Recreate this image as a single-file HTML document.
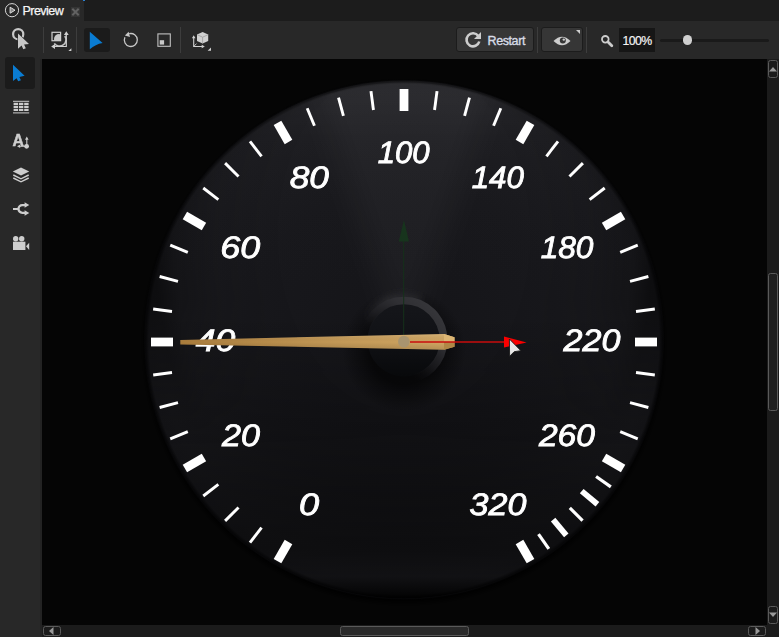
<!DOCTYPE html>
<html><head><meta charset="utf-8"><title>Preview</title>
<style>
html,body{margin:0;padding:0;background:#282828;}
body{width:779px;height:637px;position:relative;overflow:hidden;font-family:"Liberation Sans",sans-serif;color:#e6e6e6;}
.abs{position:absolute;}
#titlebar{left:0;top:0;width:779px;height:21px;background:#1c1c1c;}
#tab{left:0;top:0;width:84px;height:21px;background:#282828;}
#tabtxt{left:22.5px;top:4px;font-size:12.5px;line-height:15px;color:#f6f6f6;letter-spacing:-0.55px;-webkit-text-stroke:0.25px #f6f6f6;}
#toolbar{left:0;top:21px;width:779px;height:38px;background:#282828;}
#side{left:0;top:59px;width:42px;height:578px;background:#282828;}
#view{left:42px;top:59px;width:725px;height:566px;background:#050505;overflow:hidden;}
#vscroll{left:767px;top:59px;width:12px;height:566px;background:#1b1b1b;}
#hscroll{left:42px;top:625px;width:737px;height:12px;background:#1b1b1b;}
.sep{width:1px;background:#3d3d3d;}
.btn{background:#1b1b1b;border-radius:3px;}
.sbtn{border:1px solid #5a5a5a;border-radius:2.5px;background:#1b1b1b;box-sizing:border-box;}
#restart{left:456px;top:27px;width:78px;height:25px;background:#363636;border:1px solid #1c1c1c;border-radius:3px;box-sizing:border-box;}
#eye{left:541px;top:27px;width:42px;height:25px;background:#363636;border:1px solid #1c1c1c;border-radius:3px;box-sizing:border-box;}
#zoomtxt{left:619px;top:28px;width:36px;height:24px;background:#161616;font-size:12.3px;line-height:26px;text-align:center;color:#f4f4f4;letter-spacing:-0.6px;-webkit-text-stroke:0.2px #f4f4f4;}
</style></head><body>
<div id="titlebar" class="abs"></div>
<div id="tab" class="abs"></div>
<div class="abs" style="left:83px;top:0;width:2px;height:1px;background:#2a7fd0"></div>
<svg class="abs" style="left:4px;top:2px" width="17" height="17" viewBox="0 0 17 17"><circle cx="8" cy="8.2" r="6.6" fill="none" stroke="#d8d8d8" stroke-width="1"/><path d="M6.1 5.2 L11 8.2 L6.1 11.2Z" fill="#8a8a8a" stroke="#dcdcdc" stroke-width="1" stroke-linejoin="round"/></svg>
<div id="tabtxt" class="abs">Preview</div>
<svg class="abs" style="left:71px;top:7px" width="9" height="10" viewBox="0 0 9 10"><rect width="9" height="10" fill="#343434"/><path d="M1.3 1.7L7.7 8.3M7.7 1.7L1.3 8.3" stroke="#626262" stroke-width="2"/></svg>

<div id="toolbar" class="abs"></div>
<div id="side" class="abs"></div>
<div class="abs" style="left:40px;top:59px;width:2px;height:578px;background:#232323"></div>

<!-- toolbar items -->
<div class="abs sep" style="left:43px;top:27px;height:26px"></div>
<div class="abs sep" style="left:76px;top:27px;height:26px"></div>
<div class="abs sep" style="left:180px;top:27px;height:26px"></div>
<div class="abs btn" style="left:84px;top:28px;width:26px;height:24px"></div>
<svg class="abs" style="left:0;top:21px" width="260" height="38" viewBox="0 21 260 38">
 <!-- pick cursor -->
 <circle cx="18.2" cy="34.2" r="5.1" fill="none" stroke="#c8c8c8" stroke-width="2.2"/>
 <path d="M18 33.6 L18 48.8 L21.6 45.6 L23.3 49.3 L25.8 48.2 L24.1 44.6 L29 44Z" fill="#c8c8c8" stroke="#282828" stroke-width="1.2" paint-order="stroke"/>
 <!-- layout icon -->
 <clipPath id="sqc"><rect x="52" y="32.3" width="8.6" height="8.4"/></clipPath>
 <circle cx="59" cy="39" r="5" fill="#c8c8c8" clip-path="url(#sqc)"/>
 <rect x="52" y="32.3" width="8.6" height="8.4" fill="none" stroke="#d0d0d0" stroke-width="1.2"/>
 <path d="M54.3 43.4 A6.2 6.2 0 0 0 64.8 36" fill="none" stroke="#c4c4c4" stroke-width="1.6"/>
 <path d="M53 46.5 H66.3 V33.5" fill="none" stroke="#d0d0d0" stroke-width="1.2"/>
 <path d="M66.3 31.2 L63.9 35 H68.7Z M51.2 46.5 L55 44.1 V48.9Z" fill="#d0d0d0"/>
 <path d="M71.4 48.2 V51 H68.4Z" fill="#d0d0d0"/>
 <!-- play -->
 <path d="M89.8 31.8 L102.6 43 Q95.5 44.3 89.8 49.2Z" fill="#0a7cd2"/>
 <!-- reload -->
 <path d="M129.2 33.7 A6.5 6.5 0 1 1 124.9 37.3" fill="none" stroke="#c8c8c8" stroke-width="1.3"/>
 <path d="M124.9 35.6 L128.6 31.8 L130 36.9Z" fill="#c8c8c8"/>
 <!-- stop square -->
 <rect x="157.9" y="33.9" width="12.4" height="12.4" fill="none" stroke="#c0c0c0" stroke-width="1.1"/>
 <rect x="159.7" y="40.2" width="4.4" height="4.4" fill="#c8c8c8"/>
 <!-- cube -->
 <path d="M202.6 32 L208.2 34.6 V41 L202.6 43.6 L197 41 V34.6Z" fill="#d0d0d0"/>
 <path d="M197 34.6 L202.6 37.2 L208.2 34.6 M202.6 37.2 V43.6" fill="none" stroke="#9a9a9a" stroke-width="0.8"/>
 <path d="M193.7 37 V46.5 H203" fill="none" stroke="#d0d0d0" stroke-width="1.1"/>
 <path d="M193.7 35.2 L191.9 38.3 H195.5Z M204.8 46.5 L201.7 44.7 V48.3Z" fill="#d0d0d0"/>
 <path d="M194 46.2 L196.5 43.6" stroke="#c0c0c0" stroke-width="1"/>
 <path d="M211 47.6 V50.8 H207.6Z" fill="#d0d0d0"/>
</svg>

<div id="restart" class="abs"></div>
<svg class="abs" style="left:463px;top:29px" width="20" height="20" viewBox="0 0 20 20"><path d="M15.3 7 A6.5 6.5 0 1 0 16.3 12.5" fill="none" stroke="#cdcdcd" stroke-width="2.6"/><path d="M18 3 V10 H11Z" fill="#cdcdcd"/></svg>
<div class="abs" style="left:487.5px;top:33px;font-size:12.5px;line-height:16px;color:#d8dce6;letter-spacing:-0.4px;-webkit-text-stroke:0.35px #d8dce6">Restart</div>
<div class="abs sep" style="left:537px;top:27px;height:26px"></div>
<div id="eye" class="abs"></div>
<svg class="abs" style="left:552px;top:33.5px" width="20" height="14" viewBox="0 0 20 14"><path d="M1.5 7 Q10 -1.5 18.5 7 Q10 15.5 1.5 7Z" fill="#cdcdcd"/><circle cx="10.8" cy="6.5" r="3" fill="#363636"/><circle cx="11.8" cy="5.6" r="1.2" fill="#cdcdcd"/></svg>
<svg class="abs" style="left:575px;top:29px" width="6" height="6"><path d="M1 1 H5 V5Z" fill="#cdcdcd"/></svg>
<div class="abs sep" style="left:586px;top:27px;height:26px"></div>
<svg class="abs" style="left:599.5px;top:33.5px" width="14" height="14" viewBox="0 0 14 14"><circle cx="5.3" cy="5.3" r="3.3" fill="none" stroke="#cdcdcd" stroke-width="1.8"/><path d="M8 8 L11.8 11.8" stroke="#cdcdcd" stroke-width="2.8" stroke-linecap="round"/></svg>
<div id="zoomtxt" class="abs">100%</div>
<div class="abs" style="left:660px;top:38.5px;width:109px;height:3.5px;background:#1a1a1a;border-radius:2px"></div>
<div class="abs" style="left:683px;top:35.3px;width:9.4px;height:9.4px;border-radius:50%;background:#d0d0d0"></div>

<!-- sidebar -->
<div class="abs btn" style="left:5px;top:57px;width:30px;height:31.5px"></div>
<svg class="abs" style="left:0;top:59px;will-change:transform" width="42" height="210" viewBox="0 59 42 210">
 <path d="M13 64.8 L13 81 L16.6 78.2 L18.2 81.3 L20.9 80.2 L19.4 77 L24.6 75.8Z" fill="#0a7cd2"/>
 <!-- grid -->
 <g fill="#cdcdcd">
 <rect x="13" y="100.8" width="16.2" height="1"/>
 <rect x="13" y="112.4" width="16.2" height="1"/>
 <rect x="13.6" y="102.8" width="4.4" height="2.2"/><rect x="18.9" y="102.8" width="4.4" height="2.2"/><rect x="24.2" y="102.8" width="4.4" height="2.2"/>
 <rect x="13.6" y="105.8" width="4.4" height="2.2"/><rect x="18.9" y="105.8" width="4.4" height="2.2"/><rect x="24.2" y="105.8" width="4.4" height="2.2"/>
 <rect x="13.6" y="108.8" width="4.4" height="2.2"/><rect x="18.9" y="108.8" width="4.4" height="2.2"/><rect x="24.2" y="108.8" width="4.4" height="2.2"/>
 </g>
 <!-- A -->
 <text x="12.6" y="145.5" style="font-family:'Liberation Sans',sans-serif;font-weight:bold;font-size:15.8px" fill="#cdcdcd" stroke="#cdcdcd" stroke-width="0.5">A</text>
 <path d="M26.8 138.5 V146 M19 146.3 H25" stroke="#cdcdcd" stroke-width="1.1" fill="none"/>
 <path d="M26.8 136.6 L25 139.8 H28.6Z M17 146.3 L20.2 144.5 V148.1Z" fill="#cdcdcd"/>
 <circle cx="26.6" cy="146.3" r="2.4" fill="#cdcdcd"/>
 <!-- layers -->
 <path d="M21 167.4 L29.2 171.5 L21 175.6 L12.8 171.5Z" fill="#cdcdcd"/>
 <path d="M13.3 175 L21 178.8 L28.7 175 M13.3 178 L21 181.8 L28.7 178" fill="none" stroke="#cdcdcd" stroke-width="1.4"/>
 <!-- node -->
 <path d="M13 209 H18" stroke="#cdcdcd" stroke-width="2" fill="none"/>
 <path d="M25.5 205.2 H22.3 A3.8 3.8 0 0 0 22.3 212.8 H25.5" stroke="#cdcdcd" stroke-width="2.3" fill="none"/>
 <path d="M29.3 205 L24.6 202.3 V207.7Z M29.3 213 L24.6 210.3 V215.7Z" fill="#cdcdcd"/>
 <!-- camera -->
 <circle cx="15.7" cy="238.8" r="2.7" fill="#cdcdcd"/><circle cx="21.7" cy="238.8" r="2.7" fill="#cdcdcd"/>
 <rect x="13" y="241.7" width="12.4" height="8.3" fill="#cdcdcd"/>
 <path d="M26 246.2 L29.2 242.7 V250Z" fill="#cdcdcd"/>
</svg>

<!-- viewport -->
<div id="view" class="abs">
<svg width="725" height="566" viewBox="42 59 725 566" style="will-change:transform">
<defs>
 <radialGradient id="face" cx="404" cy="339.5" r="261" gradientUnits="userSpaceOnUse">
  <stop offset="0" stop-color="#141418"/>
  <stop offset="0.6" stop-color="#18181c"/>
  <stop offset="0.93" stop-color="#1c1c20"/>
  <stop offset="0.978" stop-color="#1b1b1f"/>
  <stop offset="0.992" stop-color="#0a0a0c" stop-opacity="0.9"/>
  <stop offset="1" stop-color="#000" stop-opacity="0"/>
 </radialGradient>
 <radialGradient id="sidedark" cx="0" cy="0" r="1" gradientUnits="userSpaceOnUse" gradientTransform="translate(404 235) scale(250 345)">
  <stop offset="0.5" stop-color="#000" stop-opacity="0"/>
  <stop offset="0.75" stop-color="#000" stop-opacity="0.1"/>
  <stop offset="0.92" stop-color="#000" stop-opacity="0.26"/>
  <stop offset="1.06" stop-color="#000" stop-opacity="0.5"/>
 </radialGradient>
 <radialGradient id="under" cx="404" cy="343" r="263" gradientUnits="userSpaceOnUse">
  <stop offset="0.97" stop-color="#000" stop-opacity="1"/>
  <stop offset="1" stop-color="#000" stop-opacity="0"/>
 </radialGradient>
 <linearGradient id="shade" x1="0" y1="80" x2="0" y2="600" gradientUnits="userSpaceOnUse">
  <stop offset="0" stop-color="#fff" stop-opacity="0.04"/>
  <stop offset="0.12" stop-color="#fff" stop-opacity="0.012"/>
  <stop offset="0.45" stop-color="#000" stop-opacity="0"/>
  <stop offset="0.8" stop-color="#000" stop-opacity="0.42"/>
  <stop offset="0.9" stop-color="#000" stop-opacity="0.5"/>
  <stop offset="0.955" stop-color="#000" stop-opacity="0.38"/>
  <stop offset="0.985" stop-color="#000" stop-opacity="0.75"/>
  <stop offset="1" stop-color="#000" stop-opacity="1"/>
 </linearGradient>
 <radialGradient id="hubshadow" cx="404" cy="350" r="62" gradientUnits="userSpaceOnUse">
  <stop offset="0" stop-color="#000" stop-opacity="0.62"/>
  <stop offset="0.55" stop-color="#000" stop-opacity="0.62"/>
  <stop offset="0.75" stop-color="#000" stop-opacity="0.32"/>
  <stop offset="1" stop-color="#000" stop-opacity="0"/>
 </radialGradient>
 <linearGradient id="sdm" x1="0" y1="80" x2="0" y2="600" gradientUnits="userSpaceOnUse"><stop offset="0.42" stop-color="#fff"/><stop offset="0.7" stop-color="#000"/></linearGradient>
 <mask id="sdmask" maskUnits="userSpaceOnUse" x="140" y="75" width="530" height="535"><rect x="140" y="75" width="530" height="535" fill="url(#sdm)"/></mask>
 <filter id="blur14" x="-50%" y="-20%" width="200%" height="140%"><feGaussianBlur stdDeviation="13"/></filter>
 <clipPath id="facec"><circle cx="404" cy="339.5" r="257"/></clipPath>
 <filter id="blur3" x="-30%" y="-30%" width="160%" height="160%"><feGaussianBlur stdDeviation="3.5"/></filter>
 <linearGradient id="glowg" x1="440" y1="300" x2="380" y2="360" gradientUnits="userSpaceOnUse">
  <stop offset="0" stop-color="#55555a" stop-opacity="0.2"/>
  <stop offset="0.45" stop-color="#55555a" stop-opacity="0.36"/>
  <stop offset="0.8" stop-color="#55555a" stop-opacity="0"/>
 </linearGradient>
 <linearGradient id="hubin" x1="0" y1="304" x2="0" y2="376" gradientUnits="userSpaceOnUse">
  <stop offset="0" stop-color="#15161a"/>
  <stop offset="0.45" stop-color="#111216"/>
  <stop offset="1" stop-color="#08090b"/>
 </linearGradient>
 <linearGradient id="hubring" x1="436" y1="304" x2="376" y2="366" gradientUnits="userSpaceOnUse">
  <stop offset="0" stop-color="#37373b" stop-opacity="1"/>
  <stop offset="0.3" stop-color="#303034" stop-opacity="0.95"/>
  <stop offset="0.55" stop-color="#222226" stop-opacity="0.6"/>
  <stop offset="0.8" stop-color="#101013" stop-opacity="0"/>
 </linearGradient>
 <linearGradient id="needle" x1="180" y1="0" x2="456" y2="0" gradientUnits="userSpaceOnUse">
  <stop offset="0" stop-color="#a97c3c"/>
  <stop offset="0.6" stop-color="#c49a58"/>
  <stop offset="1" stop-color="#d2a864"/>
 </linearGradient>
 <linearGradient id="needlev" x1="0" y1="334" x2="0" y2="350" gradientUnits="userSpaceOnUse">
  <stop offset="0" stop-color="#fff" stop-opacity="0.12"/>
  <stop offset="0.5" stop-color="#000" stop-opacity="0"/>
  <stop offset="1" stop-color="#000" stop-opacity="0.14"/>
 </linearGradient>
</defs>
<circle cx="404" cy="343" r="263" fill="url(#under)"/>
<circle cx="404" cy="339.5" r="261" fill="url(#face)"/>
<circle cx="404" cy="339.5" r="259" fill="url(#shade)"/>
<circle cx="404" cy="339.5" r="259" fill="url(#sidedark)" mask="url(#sdmask)"/>
<g clip-path="url(#facec)"><path d="M404 350 L306 60 L502 60 Z" fill="#fff" fill-opacity="0.036" filter="url(#blur14)"/></g>
<g transform="translate(404 342)" fill="#fff">
<rect x="-4.40" y="-253.00" width="8.80" height="22.00" transform="rotate(-150.00)"/>
<rect x="-4.40" y="-253.00" width="8.80" height="22.00" transform="rotate(-120.00)"/>
<rect x="-4.40" y="-253.00" width="8.80" height="22.00" transform="rotate(-90.00)"/>
<rect x="-4.40" y="-253.00" width="8.80" height="22.00" transform="rotate(-60.00)"/>
<rect x="-4.40" y="-253.00" width="8.80" height="22.00" transform="rotate(-30.00)"/>
<rect x="-4.40" y="-253.00" width="8.80" height="22.00" transform="rotate(0.00)"/>
<rect x="-4.40" y="-253.00" width="8.80" height="22.00" transform="rotate(30.00)"/>
<rect x="-4.40" y="-253.00" width="8.80" height="22.00" transform="rotate(60.00)"/>
<rect x="-4.40" y="-253.00" width="8.80" height="22.00" transform="rotate(90.00)"/>
<rect x="-4.40" y="-253.00" width="8.80" height="22.00" transform="rotate(120.00)"/>
<rect x="-4.40" y="-253.00" width="8.80" height="22.00" transform="rotate(150.00)"/>
<rect x="-1.45" y="-253.00" width="2.90" height="19.00" transform="rotate(-142.50)"/>
<rect x="-1.45" y="-253.00" width="2.90" height="19.00" transform="rotate(-135.00)"/>
<rect x="-1.45" y="-253.00" width="2.90" height="19.00" transform="rotate(-127.50)"/>
<rect x="-1.45" y="-253.00" width="2.90" height="19.00" transform="rotate(-112.50)"/>
<rect x="-1.45" y="-253.00" width="2.90" height="19.00" transform="rotate(-105.00)"/>
<rect x="-1.45" y="-253.00" width="2.90" height="19.00" transform="rotate(-97.50)"/>
<rect x="-1.45" y="-253.00" width="2.90" height="19.00" transform="rotate(-82.50)"/>
<rect x="-1.45" y="-253.00" width="2.90" height="19.00" transform="rotate(-75.00)"/>
<rect x="-1.45" y="-253.00" width="2.90" height="19.00" transform="rotate(-67.50)"/>
<rect x="-1.45" y="-253.00" width="2.90" height="19.00" transform="rotate(-52.50)"/>
<rect x="-1.45" y="-253.00" width="2.90" height="19.00" transform="rotate(-45.00)"/>
<rect x="-1.45" y="-253.00" width="2.90" height="19.00" transform="rotate(-37.50)"/>
<rect x="-1.45" y="-253.00" width="2.90" height="19.00" transform="rotate(-22.50)"/>
<rect x="-1.45" y="-253.00" width="2.90" height="19.00" transform="rotate(-15.00)"/>
<rect x="-1.45" y="-253.00" width="2.90" height="19.00" transform="rotate(-7.50)"/>
<rect x="-1.45" y="-253.00" width="2.90" height="19.00" transform="rotate(7.50)"/>
<rect x="-1.45" y="-253.00" width="2.90" height="19.00" transform="rotate(15.00)"/>
<rect x="-1.45" y="-253.00" width="2.90" height="19.00" transform="rotate(22.50)"/>
<rect x="-1.45" y="-253.00" width="2.90" height="19.00" transform="rotate(37.50)"/>
<rect x="-1.45" y="-253.00" width="2.90" height="19.00" transform="rotate(45.00)"/>
<rect x="-1.45" y="-253.00" width="2.90" height="19.00" transform="rotate(52.50)"/>
<rect x="-1.45" y="-253.00" width="2.90" height="19.00" transform="rotate(67.50)"/>
<rect x="-1.45" y="-253.00" width="2.90" height="19.00" transform="rotate(75.00)"/>
<rect x="-1.45" y="-253.00" width="2.90" height="19.00" transform="rotate(82.50)"/>
<rect x="-1.45" y="-253.00" width="2.90" height="19.00" transform="rotate(97.50)"/>
<rect x="-1.45" y="-253.00" width="2.90" height="19.00" transform="rotate(105.00)"/>
<rect x="-1.45" y="-253.00" width="2.90" height="19.00" transform="rotate(112.50)"/>
<rect x="-1.60" y="-252.50" width="3.20" height="18.00" transform="rotate(125.00)"/>
<rect x="-2.90" y="-252.50" width="5.80" height="20.50" transform="rotate(130.00)"/>
<rect x="-1.60" y="-252.50" width="3.20" height="18.00" transform="rotate(135.00)"/>
<rect x="-2.90" y="-252.50" width="5.80" height="20.50" transform="rotate(140.00)"/>
<rect x="-1.60" y="-252.50" width="3.20" height="18.00" transform="rotate(145.00)"/>
</g>
<g font-family="Liberation Sans, sans-serif" font-style="italic" font-size="31" fill="#fff" stroke="#fff" stroke-width="0.85" text-anchor="middle" text-rendering="geometricPrecision">
<text transform="translate(309.15 515.10) scale(1.169 1.000)">0</text>
<text transform="translate(240.90 446.10) scale(1.101 1.000)">20</text>
<text transform="translate(215.55 351.40) scale(1.146 1.000)">40</text>
<text transform="translate(240.15 257.80) scale(1.157 1.000)">60</text>
<text transform="translate(309.35 187.90) scale(1.137 1.000)">80</text>
<text transform="translate(403.70 163.20) scale(1.006 1.000)">100</text>
<text transform="translate(497.80 187.90) scale(1.011 1.000)">140</text>
<text transform="translate(567.05 257.90) scale(1.021 1.000)">180</text>
<text transform="translate(592.05 351.40) scale(1.100 1.000)">220</text>
<text transform="translate(566.95 446.10) scale(1.084 1.000)">260</text>
<text transform="translate(497.95 515.10) scale(1.100 1.000)">320</text>
</g>
<!-- hub -->
<circle cx="404" cy="350" r="62" fill="url(#hubshadow)"/>
<path d="M362 340 A42 42 0 0 1 420 301" fill="none" stroke="url(#glowg)" stroke-width="9" filter="url(#blur3)"/>
<circle cx="404" cy="340" r="36.5" fill="url(#hubin)"/>
<circle cx="404" cy="340" r="39.5" fill="none" stroke="url(#hubring)" stroke-width="7.7"/>
<!-- green axis -->
<path d="M403.7 338 V240" stroke="#16311b" stroke-width="1"/>
<path d="M403.9 220 L398.8 241.5 H409Z" fill="#17341d"/>
<!-- needle -->
<g id="needleg">
<path d="M180.3 339.9 L444 334 L454.5 337.3 L454.5 346.7 L444 349.8 L180.3 344.4Z" fill="url(#needle)"/>
<path d="M180.3 339.9 L444 334 L454.5 337.3 L454.5 346.7 L444 349.8 L180.3 344.4Z" fill="url(#needlev)"/>
<path d="M444 334 L454.5 337.3 L454.5 342 L444 342Z" fill="#dcb674"/>
<path d="M444 342 L454.5 342 L454.5 346.7 L444 349.8Z" fill="#b08846"/>
<circle cx="403.9" cy="341.6" r="5.9" fill="#a8946f"/>
<path d="M410 342 H506" stroke="#c80c0c" stroke-width="1.5"/>
<path d="M504 336.5 L526.6 342.4 L504 347.5Z" fill="#fa0000"/>
<!-- mouse cursor -->
<path d="M509.4 339 L509.6 356.3 L514.2 351.7 L520.9 350.7Z" fill="#e9e9e9" stroke="#1a1a1a" stroke-width="0.9" stroke-linejoin="round"/>
</g>
</svg>
</div>

<div id="vscroll" class="abs"></div>
<div id="hscroll" class="abs"></div>
<!-- scroll buttons -->
<div class="abs sbtn" style="left:768px;top:60px;width:10px;height:18px"></div>
<svg class="abs" style="left:769px;top:66.5px" width="8" height="5"><path d="M4 0 L8 4.5 H0Z" fill="#9a9a9a"/></svg>
<div class="abs sbtn" style="left:768px;top:606px;width:10px;height:18px"></div>
<svg class="abs" style="left:769px;top:612px" width="8" height="5"><path d="M0 0.5 H8 L4 5Z" fill="#9a9a9a"/></svg>
<div class="abs sbtn" style="left:768px;top:273px;width:10px;height:138px;background:#1f1f1f"></div>
<div class="abs sbtn" style="left:43px;top:626px;width:18px;height:10px"></div>
<svg class="abs" style="left:49px;top:627px" width="5" height="8"><path d="M0 4 L4.5 0 V8Z" fill="#9a9a9a"/></svg>
<div class="abs sbtn" style="left:748px;top:626px;width:18px;height:10px"></div>
<svg class="abs" style="left:755px;top:627px" width="5" height="8"><path d="M5 4 L0.5 0 V8Z" fill="#9a9a9a"/></svg>
<div class="abs sbtn" style="left:340px;top:626px;width:129px;height:10px;background:#2a2a2a"></div>
</body></html>
